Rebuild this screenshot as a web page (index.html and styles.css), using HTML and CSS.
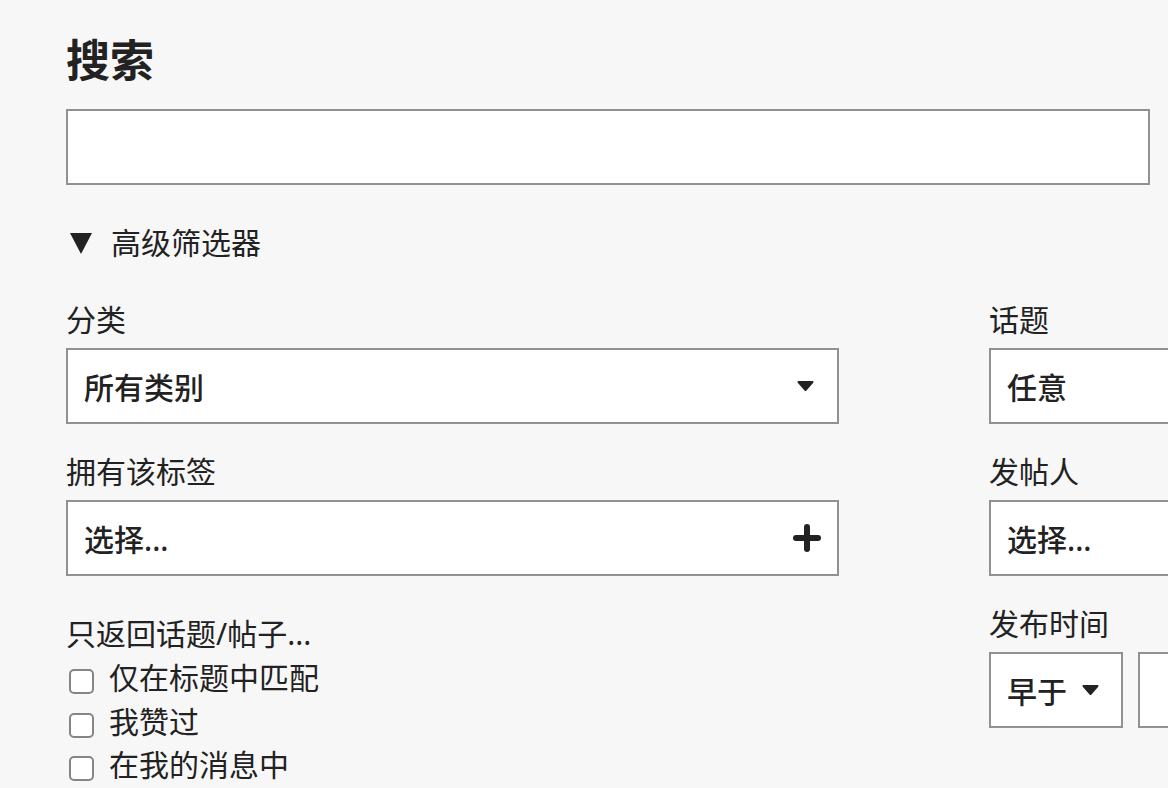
FILE: index.html
```html
<!DOCTYPE html>
<html lang="zh-CN">
<head>
    <meta charset="UTF-8">
    <meta name="viewport" content="width=device-width, initial-scale=1.0">
    <title>搜索</title>
    <link rel="stylesheet" href="styles.css">
</head>
<body>
<div class="search-page">
    <h1>搜索</h1>
    <input class="search-input" type="text" aria-label="搜索">

    <div class="advanced-toggle">
        <svg class="toggle-arrow" viewBox="0 0 22 21" width="22" height="21"><path d="M0 0 H22 L11 21 Z" fill="#222"/></svg>
        <span>高级筛选器</span>
    </div>

    <div class="filters">
        <div class="filter-column">
            <div class="form-group">
                <label>分类</label>
                <div class="select-box">
                    <span class="select-text">所有类别</span>
                    <svg class="caret" viewBox="0 0 17 10" width="17" height="10"><path d="M1.5 1 H15.5 L8.5 9 Z" fill="#222" stroke="#222" stroke-width="2" stroke-linejoin="round"/></svg>
                </div>
            </div>
            <div class="form-group">
                <label>拥有该标签</label>
                <div class="select-box">
                    <span class="select-text">选择...</span>
                    <svg class="plus" viewBox="0 0 28 28" width="28" height="28"><path d="M14 3 V25 M3 14 H25" stroke="#222" stroke-width="6" stroke-linecap="round"/></svg>
                </div>
            </div>
            <div class="form-group only-return">
                <label>只返回话题/帖子...</label>
                <div class="check-row"><span class="checkbox"></span><span class="check-label">仅在标题中匹配</span></div>
                <div class="check-row"><span class="checkbox"></span><span class="check-label">我赞过</span></div>
                <div class="check-row"><span class="checkbox"></span><span class="check-label">在我的消息中</span></div>
            </div>
        </div>

        <div class="filter-column">
            <div class="form-group">
                <label>话题</label>
                <div class="select-box">
                    <span class="select-text">任意</span>
                    <svg class="caret" viewBox="0 0 17 10" width="17" height="10"><path d="M1.5 1 H15.5 L8.5 9 Z" fill="#222" stroke="#222" stroke-width="2" stroke-linejoin="round"/></svg>
                </div>
            </div>
            <div class="form-group">
                <label>发帖人</label>
                <div class="select-box">
                    <span class="select-text">选择...</span>
                    <svg class="caret" viewBox="0 0 17 10" width="17" height="10"><path d="M1.5 1 H15.5 L8.5 9 Z" fill="#222" stroke="#222" stroke-width="2" stroke-linejoin="round"/></svg>
                </div>
            </div>
            <div class="form-group">
                <label>发布时间</label>
                <div class="date-row">
                    <div class="select-box when-box">
                        <span class="select-text">早于</span>
                        <svg class="caret" viewBox="0 0 17 10" width="17" height="10"><path d="M1.5 1 H15.5 L8.5 9 Z" fill="#222" stroke="#222" stroke-width="2" stroke-linejoin="round"/></svg>
                    </div>
                    <div class="select-box date-box"></div>
                </div>
            </div>
        </div>
    </div>
</div>
</body>
</html>
```

FILE: styles.css
```css
body {
    margin: 0;
    padding: 0;
    background-color: #f7f7f7;
    color: #222222;
    font-family: "Noto Sans", "Noto Sans CJK SC", sans-serif;
    font-size: 30px;
    overflow: hidden;
}

.search-page {
    padding-left: 66px;
    width: 1700px;
}

h1 {
    margin: 35px 0 24px 0;
    font-size: 44px;
    line-height: 50px;
    font-weight: bold;
}

.search-input {
    display: block;
    width: 1084px;
    height: 76px;
    margin: 0;
    border: 2px solid #919191;
    background-color: #ffffff;
    box-sizing: border-box;
    outline: none;
}

/* 高级筛选器 */
.advanced-toggle {
    display: flex;
    align-items: center;
    margin: 38px 0 37px 0;
    height: 40px;
    line-height: 40px;
}

.toggle-arrow {
    margin-left: 4px;
    margin-right: 19px;
}

.filters {
    display: flex;
    gap: 150px;
}

.filter-column {
    width: 773px;
    display: flex;
    flex-direction: column;
    flex-shrink: 0;
}

.form-group {
    margin-bottom: 28px;
}

.form-group label {
    display: block;
    line-height: 40px;
    margin-bottom: 8px;
}

.select-box {
    display: flex;
    align-items: center;
    justify-content: space-between;
    height: 76px;
    padding: 0 16px;
    border: 2px solid #919191;
    background-color: #ffffff;
    box-sizing: border-box;
}

.select-text {
    font-weight: 500;
}

.caret {
    margin-right: 7px;
}

.only-return {
    margin-top: 10px;
}

.only-return label {
    margin-bottom: 6px;
}

.check-row {
    display: flex;
    align-items: center;
    height: 43.5px;
}

.check-label {
    line-height: 36px;
    margin-bottom: 7px;
}

.checkbox {
    width: 25px;
    height: 25px;
    margin-left: 3px;
    margin-right: 15px;
    border: 2px solid #858585;
    border-radius: 5px;
    background-color: #ffffff;
    box-sizing: border-box;
}

.date-row {
    display: flex;
    gap: 15px;
}

.when-box {
    width: 134px;
    flex-shrink: 0;
}

.when-box .caret {
    margin-right: 6px;
}

.date-box {
    width: 400px;
    flex-shrink: 0;
}
```
